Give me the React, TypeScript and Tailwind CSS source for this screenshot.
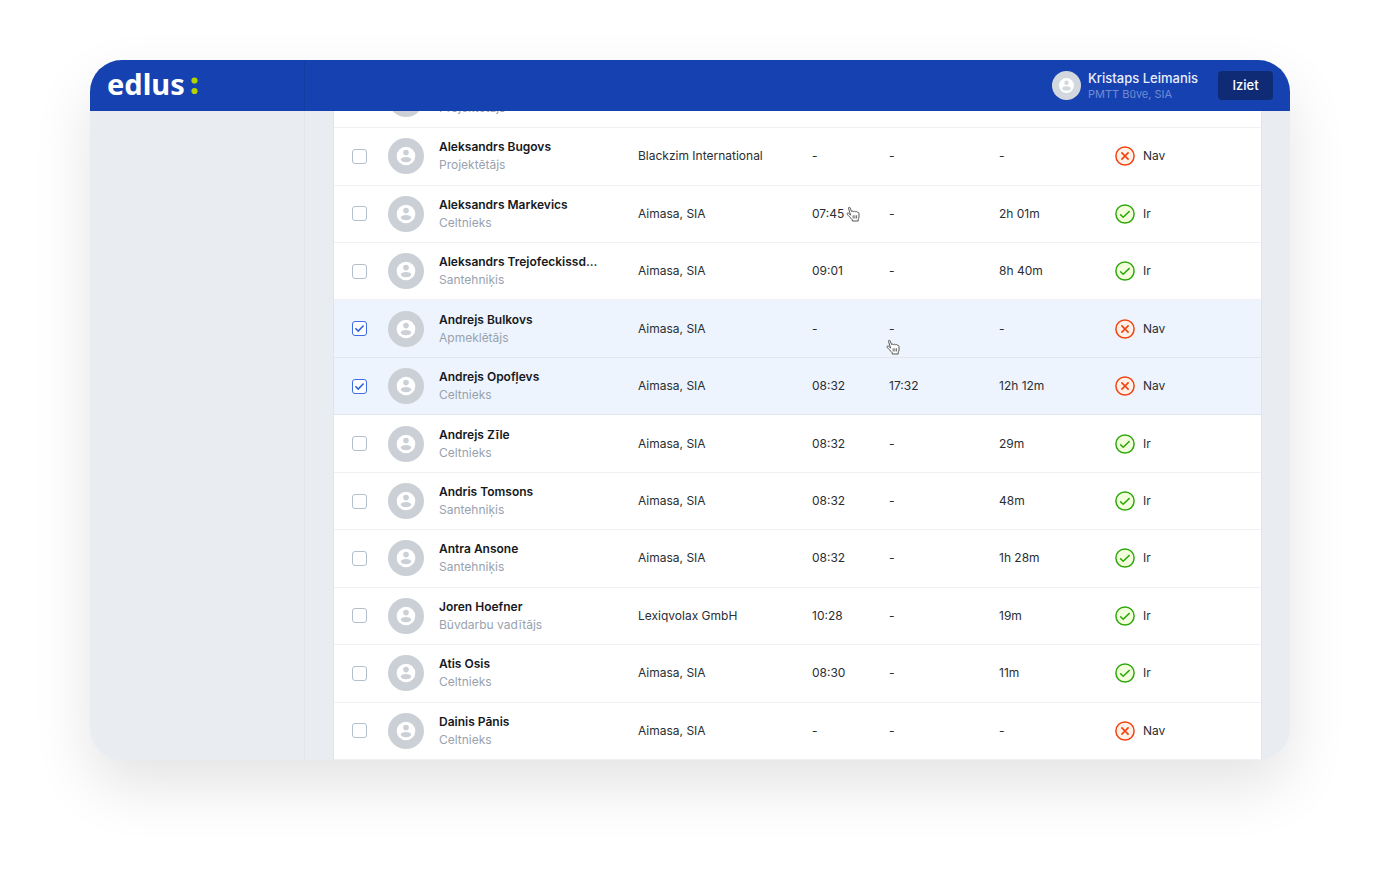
import { useState } from "react";

type Worker = {
  name: string;
  role: string;
  company: string;
  arrived: string;
  left: string;
  duration: string;
  present?: boolean;
  selected?: boolean;
  pointer?: "arrived" | "left";
};

const workers: Worker[] = [
  { name: "", role: "Projektētājs", company: "", arrived: "", left: "", duration: "" },
  { name: "Aleksandrs Bugovs", role: "Projektētājs", company: "Blackzim International", arrived: "-", left: "-", duration: "-", present: false },
  { name: "Aleksandrs Markevics", role: "Celtnieks", company: "Aimasa, SIA", arrived: "07:45", left: "-", duration: "2h 01m", present: true, pointer: "arrived" },
  { name: "Aleksandrs Trejofeckissd...", role: "Santehniķis", company: "Aimasa, SIA", arrived: "09:01", left: "-", duration: "8h 40m", present: true },
  { name: "Andrejs Bulkovs", role: "Apmeklētājs", company: "Aimasa, SIA", arrived: "-", left: "-", duration: "-", present: false, selected: true, pointer: "left" },
  { name: "Andrejs Opofļevs", role: "Celtnieks", company: "Aimasa, SIA", arrived: "08:32", left: "17:32", duration: "12h 12m", present: false, selected: true },
  { name: "Andrejs Zīle", role: "Celtnieks", company: "Aimasa, SIA", arrived: "08:32", left: "-", duration: "29m", present: true },
  { name: "Andris Tomsons", role: "Santehniķis", company: "Aimasa, SIA", arrived: "08:32", left: "-", duration: "48m", present: true },
  { name: "Antra Ansone", role: "Santehniķis", company: "Aimasa, SIA", arrived: "08:32", left: "-", duration: "1h 28m", present: true },
  { name: "Joren Hoefner", role: "Būvdarbu vadītājs", company: "Lexiqvolax GmbH", arrived: "10:28", left: "-", duration: "19m", present: true },
  { name: "Atis Osis", role: "Celtnieks", company: "Aimasa, SIA", arrived: "08:30", left: "-", duration: "11m", present: true },
  { name: "Dainis Pānis", role: "Celtnieks", company: "Aimasa, SIA", arrived: "-", left: "-", duration: "-", present: false },
];

function Avatar({ className }: { className: string }) {
  return (
    <svg viewBox="0 0 36 36" className={className} aria-hidden="true">
      <circle cx="18" cy="18" r="18" fill="currentColor" />
      <circle cx="18" cy="18" r="9.3" fill="#fff" />
      <circle cx="18" cy="14.6" r="2.8" fill="currentColor" />
      <ellipse cx="18" cy="21.6" rx="5.2" ry="2.7" fill="currentColor" />
    </svg>
  );
}

function StatusIcon({ present }: { present: boolean }) {
  return present ? (
    <svg viewBox="0 0 20 20" className="size-5 shrink-0" fill="none" aria-hidden="true">
      <circle cx="10" cy="10" r="9.1" fill="#f3ffdc" stroke="#2fa80c" strokeWidth="1.5" />
      <path d="M5.2 10.4l3 2.9 6.4-6.2" stroke="#2fa80c" strokeWidth="1.5" />
    </svg>
  ) : (
    <svg viewBox="0 0 20 20" className="size-5 shrink-0" fill="none" aria-hidden="true">
      <circle cx="10" cy="10" r="9.1" fill="#fff1e8" stroke="#f0430f" strokeWidth="1.5" />
      <path d="M6.4 6.4l7.2 7.2M13.6 6.4l-7.2 7.2" stroke="#f0430f" strokeWidth="1.6" />
    </svg>
  );
}

function HandPointer({ className }: { className: string }) {
  return (
    <svg viewBox="0 0 14 16" className={className} aria-hidden="true">
      <path
        d="M4.6 9.2L2.5 2.3C2.2 1.3 3.6.7 4.1 1.8l1.6 3.9c.4-.8 1.6-.8 2 0 .5-.7 1.6-.6 2 .2.6-.6 1.7-.4 2 .5.7-.1 1.3.4 1.3 1.3v3.4c0 .8-.6 1.7-.8 2.5v1.4H6.3v-1.1c-1-.9-2-2.2-2.8-3.2-.5-.8-1.5-1.4-2.3-2.2-.7-.8.1-1.7 1-1.4.9.2 1.6 1.2 2.4 2.1z"
        fill="#fff"
        stroke="#444"
        strokeWidth="0.9"
        strokeLinejoin="round"
      />
      <path d="M7.2 9.3v3.2M8.9 9.3v3.2M10.6 9.3v3.2" stroke="#444" strokeWidth="0.8" />
    </svg>
  );
}

function WorkerRow({ worker }: { worker: Worker }) {
  const [checked, setChecked] = useState(Boolean(worker.selected));
  return (
    <tr className={checked ? "border-b border-[#dfe7f1] bg-[#edf4fd]" : "border-b border-[#eff1f3]"}>
      <td className="pl-[18px]">
        <span className="relative flex size-[15px]">
          <input
            type="checkbox"
            aria-label={worker.name || worker.role}
            checked={checked}
            onChange={(e) => setChecked(e.target.checked)}
            className="size-[15px] appearance-none rounded-[3px] border border-[#b3bfcc] bg-white checked:border-[#3d6ce6]"
          />
          {checked && (
            <svg viewBox="0 0 15 15" className="pointer-events-none absolute inset-0" fill="none" aria-hidden="true">
              <path d="M3.4 7.3l2.8 2.8 5.4-5.6" stroke="#2f60e0" strokeWidth="1.6" />
            </svg>
          )}
        </span>
      </td>
      <td>
        <div className="flex items-center gap-[15px]">
          <Avatar className="size-9 shrink-0 text-[#cad0d5]" />
          <div className="whitespace-nowrap leading-[18px]">
            <div className="min-h-[18px] font-semibold text-[#16191d]">{worker.name}</div>
            <div className="text-[#98a2ae]">{worker.role}</div>
          </div>
        </div>
      </td>
      <td>{worker.company}</td>
      <td>
        <span className="relative">
          {worker.arrived}
          {worker.pointer === "arrived" && <HandPointer className="absolute -right-4 top-0 h-4 w-3.5" />}
        </span>
      </td>
      <td>
        <span className="relative">
          {worker.left}
          {worker.pointer === "left" && <HandPointer className="absolute -left-[3px] top-[18px] h-4 w-3.5 max-w-none" />}
        </span>
      </td>
      <td>{worker.duration}</td>
      <td>
        {worker.present !== undefined && (
          <div className="flex items-center gap-2">
            <StatusIcon present={worker.present} />
            {worker.present ? "Ir" : "Nav"}
          </div>
        )}
      </td>
    </tr>
  );
}

export default function App() {
  return (
    <div className="min-h-screen bg-white px-[90px] pt-[60px] font-['Inter',sans-serif] text-[#2a2e33]">
      <div className="overflow-hidden rounded-[32px] bg-[#e9edf2] shadow-[0_26px_60px_rgba(0,0,0,0.11)]">
        <header className="flex h-[51px] items-stretch bg-[#1641b0]">
          <div className="flex w-[215px] items-start border-r border-[#143ca5] pl-[17px]">
            <a
              href="#"
              aria-label="edlus:"
              className="flex items-center gap-1.5 font-['Noto_Sans',sans-serif] text-[29px] font-bold leading-[48px] text-white"
            >
              <span>edlus</span>
              <svg viewBox="0 0 7 18" className="mt-1 h-[18px] w-[7px]" fill="#b5d300" aria-hidden="true">
                <circle cx="3.5" cy="3.5" r="3.1" />
                <circle cx="3.5" cy="14" r="3.1" />
              </svg>
            </a>
          </div>
          <div className="flex flex-1 items-center justify-end pr-[17px]">
            <Avatar className="size-[29px] text-[#d2d8de]" />
            <div className="ml-[7px] leading-4">
              <div className="text-[13px] font-medium text-[#e8eefb]">Kristaps Leimanis</div>
              <div className="text-[11px] text-[#6f8cd3]">PMTT Būve, SIA</div>
            </div>
            <button className="ml-5 h-[29px] w-[55px] rounded-[4px] bg-[#102b75] text-[13px] font-medium text-white">
              Iziet
            </button>
          </div>
        </header>
        <div className="flex h-[649px]">
          <aside className="w-[215px] border-r border-[#e3e7ec]" />
          <main className="mx-7 flex flex-1 flex-col justify-end overflow-hidden border-x border-[#e0e5eb] bg-white">
            <table className="h-[689px] w-full shrink-0 table-fixed border-collapse text-left text-[12px]">
              <colgroup>
                <col className="w-[54px]" />
                <col className="w-[250px]" />
                <col className="w-[174px]" />
                <col className="w-[77px]" />
                <col className="w-[110px]" />
                <col className="w-[116px]" />
                <col />
              </colgroup>
              <tbody>
                {workers.map((worker, index) => (
                  <WorkerRow key={index} worker={worker} />
                ))}
              </tbody>
            </table>
          </main>
        </div>
      </div>
    </div>
  );
}
